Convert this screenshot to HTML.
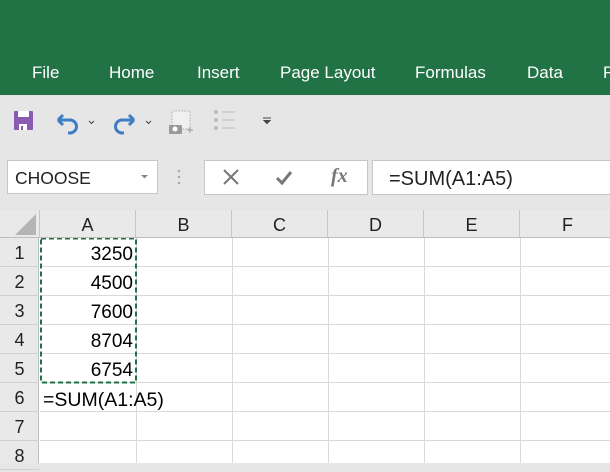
<!DOCTYPE html>
<html><head><style>
*{margin:0;padding:0;box-sizing:border-box}
body{width:610px;height:463px;overflow:hidden;background:#e6e6e6;font-family:"Liberation Sans",sans-serif;position:relative}
.a{position:absolute}
.tab{position:absolute;top:63px;color:#fff;font-size:17px}
.hdr{position:absolute;top:210px;height:28px;border-right:1px solid #c6c6c6;text-align:center;font-size:18px;line-height:30px;color:#222}
.rh{position:absolute;left:0;width:39px;height:29px;border-bottom:1px solid #d0d0d0;font-size:18px;line-height:31px;color:#222;text-align:center}
.num{position:absolute;left:40px;width:93px;text-align:right;font-size:19px;color:#000}
</style></head><body>
<div class="a" style="left:0;top:0;width:610px;height:95px;background:#217346"></div>
<div class="tab" style="left:32px">File</div>
<div class="tab" style="left:109px">Home</div>
<div class="tab" style="left:197px">Insert</div>
<div class="tab" style="left:280px">Page Layout</div>
<div class="tab" style="left:415px">Formulas</div>
<div class="tab" style="left:527px">Data</div>
<div class="tab" style="left:603px">R</div>

<svg class="a" style="left:0;top:100px" width="290" height="50">
<rect x="14" y="11" width="19" height="19" rx="1" fill="#8a5bb3"/>
<rect x="18" y="11" width="11" height="6" fill="#fff"/>
<rect x="19" y="24" width="8" height="6" fill="#fff"/><rect x="21" y="26" width="2" height="4" fill="#8a5bb3"/>
<path d="M58 20 l5-5 M58 20 l5 5 M58 20 h12 a6.5 6.5 0 0 1 0 13 h-2" stroke="#3e7cc4" stroke-width="3" fill="none"/>
<path d="M89 21 l2.5 2.5 l2.5-2.5" stroke="#444" fill="none"/>
<path d="M134 20 l-5-5 M134 20 l-5 5 M134 20 h-12 a6.5 6.5 0 0 0 0 13 h2" stroke="#3e7cc4" stroke-width="3" fill="none"/>
<path d="M146 21 l2.5 2.5 l2.5-2.5" stroke="#444" fill="none"/>
<rect x="172" y="11" width="18" height="18" fill="#f0f0f0" stroke="#bbb" stroke-dasharray="2 1"/>
<rect x="169" y="25" width="13" height="9" rx="1" fill="#999"/><circle cx="175" cy="29" r="2.5" fill="#fff"/>
<path d="M187 30 h6 M190 27 v6" stroke="#999"/>
<circle cx="216" cy="12" r="2" fill="#bbb"/><circle cx="216" cy="20" r="2" fill="#bbb"/><circle cx="216" cy="28" r="2" fill="#bbb"/>
<path d="M222 12h13M222 20h13M222 28h13" stroke="#bbb"/>
<path d="M263 18h8M264 20.5l3 3 3-3z" stroke="#444" fill="#444"/>
</svg>

<div class="a" style="left:7px;top:160px;width:151px;height:34px;background:#fff;border:1px solid #c6c6c6;font-size:17.5px;line-height:35px;padding-left:7px;color:#222">CHOOSE</div>
<svg class="a" style="left:140px;top:174px" width="10" height="6"><path d="M1 1h7l-3.5 3.5z" fill="#888"/></svg>
<svg class="a" style="left:176px;top:168px" width="6" height="20"><circle cx="3" cy="3" r="1.3" fill="#aaa"/><circle cx="3" cy="9" r="1.3" fill="#aaa"/><circle cx="3" cy="15" r="1.3" fill="#aaa"/></svg>
<div class="a" style="left:204px;top:160px;width:164px;height:35px;background:#fff;border:1px solid #c6c6c6"></div>
<svg class="a" style="left:222px;top:168px" width="130" height="20">
<path d="M2 2l14 14M16 2L2 16" stroke="#777" stroke-width="2"/>
<path d="M55 10l5 5 9-11" stroke="#777" stroke-width="3" fill="none"/>
</svg>
<div class="a" style="left:331px;top:165px;font-family:'Liberation Serif',serif;font-style:italic;font-weight:bold;font-size:20px;color:#777">fx</div>
<div class="a" style="left:372px;top:160px;width:240px;height:35px;background:#fff;border:1px solid #c6c6c6;font-size:20px;line-height:36px;padding-left:16px;color:#222">=SUM(A1:A5)</div>

<div class="a" style="left:0;top:210px;width:610px;height:253px;background:#fff"></div>
<div class="a" style="left:0;top:210px;width:610px;height:28px;background:#e9e9e9;border-bottom:1px solid #bdbdbd"></div>
<div class="a" style="left:0;top:238px;width:39px;height:225px;background:#e9e9e9;border-right:1px solid #bdbdbd"></div>
<svg class="a" style="left:15px;top:213px" width="22" height="22"><path d="M21 1v21H0z" fill="#b5b5b5"/></svg>
<div class="hdr" style="left:39px;width:97px;border-left:1px solid #c6c6c6">A</div>
<div class="hdr" style="left:136px;width:96px">B</div>
<div class="hdr" style="left:232px;width:96px">C</div>
<div class="hdr" style="left:328px;width:96px">D</div>
<div class="hdr" style="left:424px;width:96px">E</div>
<div class="hdr" style="left:520px;width:96px">F</div>

<svg class="a" style="left:40px;top:238px" width="570" height="225">
<g stroke="#d9d9d9" stroke-width="1">
<path d="M96.5 0v225M192.5 0v225M288.5 0v225M384.5 0v225M480.5 0v225"/>
<path d="M0 28.5h570M0 57.5h570M0 86.5h570M0 115.5h570M0 144.5h570M0 173.5h570M0 202.5h570"/>
</g>
<rect x="1" y="0.5" width="95" height="144" fill="none" stroke="#217346" stroke-width="2" stroke-dasharray="5 3"/>
</svg>
<div class="rh" style="top:238px">1</div>
<div class="rh" style="top:267px">2</div>
<div class="rh" style="top:296px">3</div>
<div class="rh" style="top:325px">4</div>
<div class="rh" style="top:354px">5</div>
<div class="rh" style="top:383px">6</div>
<div class="rh" style="top:412px">7</div>
<div class="rh" style="top:441px">8</div>
<div class="num" style="top:244px">3250</div>
<div class="num" style="top:273px">4500</div>
<div class="num" style="top:302px">7600</div>
<div class="num" style="top:331px">8704</div>
<div class="num" style="top:360px">6754</div>
<div class="a" style="left:43px;top:389px;font-size:19.5px;color:#000">=SUM(A1:A5)</div>
</body></html>
